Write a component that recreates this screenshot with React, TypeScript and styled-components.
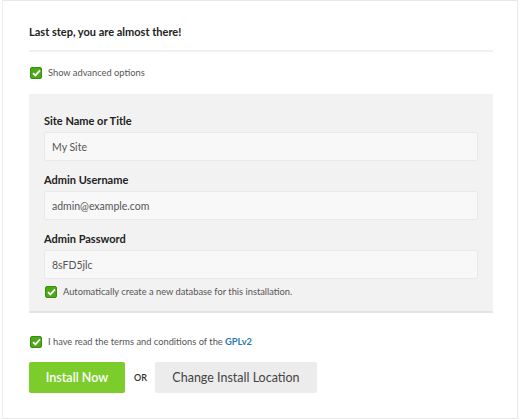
import styled, { createGlobalStyle } from "styled-components";

const GlobalStyle = createGlobalStyle`
  * { box-sizing: border-box; }
  body {
    margin: 0;
    background: #fff;
    font-family: Lato, "Open Sans", "Liberation Sans", sans-serif;
    color: #333;
  }
`;

const Card = styled.div`
  margin-left: 2px;
  width: 516px;
  height: 419px;
  border: 1px solid #e8e8e8;
  border-left-color: #eeeeee;
  padding: 0 24px 0 26px;
`;

const Heading = styled.h2`
  margin: 0;
  padding: 24px 0 11px 0;
  font-size: 11px;
  line-height: 14px;
  font-weight: 700;
  color: #222;
  border-bottom: 2px solid #f0f0f0;
`;

const CheckRow = styled.label<{ indent?: number; top: number }>`
  display: flex;
  align-items: center;
  gap: 6px;
  height: 12px;
  line-height: 12px;
  margin-top: ${(p) => p.top}px;
  margin-left: ${(p) => p.indent ?? 1}px;
  font-size: 9.3px;
  color: #555;
  white-space: nowrap;
`;

const Box = styled.span`
  width: 12px;
  height: 12px;
  border-radius: 2px;
  background: #4ca816;
  border: 1px solid #3d8d0c;
  display: flex;
  align-items: center;
  justify-content: center;
  flex: none;
`;

const Panel = styled.div`
  margin-top: 15px;
  width: 464px;
  background: #f2f2f2;
  border-bottom: 2px solid #e4e4e4;
  padding: 20px 15px 13px 15px;
`;

const Label = styled.div<{ first?: boolean }>`
  font-size: 11px;
  font-weight: 700;
  color: #222;
  margin-top: ${(p) => (p.first ? 0 : 12)}px;
  line-height: 14px;
`;

const Input = styled.div`
  margin-top: 4px;
  height: 29px;
  width: 434px;
  background: #f8f8f8;
  border: 1px solid #e9e9e9;
  border-radius: 2px;
  padding: 0 7px;
  display: flex;
  align-items: center;
  font-size: 10.5px;
  color: #555;
`;

const Link = styled.span`
  color: #2a7bb0;
  font-weight: 700;
`;

const Actions = styled.div`
  margin-top: 14px;
  display: flex;
  align-items: center;
`;

const Button = styled.button<{ primary?: boolean }>`
  height: 31px;
  border: none;
  border-radius: 2px;
  font-family: inherit;
  font-size: 12.5px;
  font-weight: ${(p) => (p.primary ? 600 : 400)};
  padding: 0;
  white-space: nowrap;
  background: ${(p) => (p.primary ? "#7ccd2c" : "#ececec")};
  color: ${(p) => (p.primary ? "#fff" : "#444")};
  width: ${(p) => (p.primary ? 96 : 162)}px;
`;

const Or = styled.span`
  font-size: 9px;
  font-weight: 600;
  color: #333;
  margin: 0 8px 0 9px;
`;

const Check = () => (
  <Box>
    <svg width="9" height="8" viewBox="0 0 9 8">
      <path d="M1 4.2 L3.4 6.4 L8 1.4" fill="none" stroke="#fff" strokeWidth="1.8" />
    </svg>
  </Box>
);

export default function App() {
  return (
    <>
      <GlobalStyle />
      <Card>
        <Heading>Last step, you are almost there!</Heading>
        <CheckRow top={15}>
          <Check />
          Show advanced options
        </CheckRow>
        <Panel>
          <Label first>Site Name or Title</Label>
          <Input>My Site</Input>
          <Label>Admin Username</Label>
          <Input>admin@example.com</Input>
          <Label>Admin Password</Label>
          <Input>8sFD5jlc</Input>
          <CheckRow top={7} indent={1}>
            <Check />
            Automatically create a new database for this installation.
          </CheckRow>
        </Panel>
        <CheckRow top={23}>
          <Check />
          <span>
            I have read the terms and conditions of the <Link>GPLv2</Link>
          </span>
        </CheckRow>
        <Actions>
          <Button primary>Install Now</Button>
          <Or>OR</Or>
          <Button>Change Install Location</Button>
        </Actions>
      </Card>
    </>
  );
}
